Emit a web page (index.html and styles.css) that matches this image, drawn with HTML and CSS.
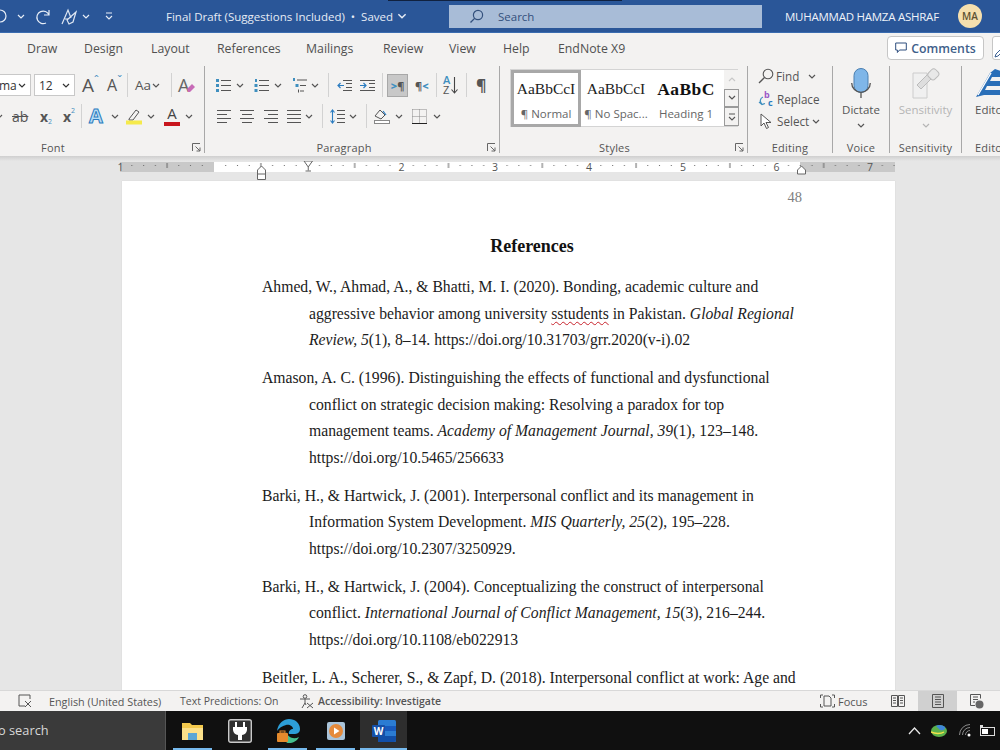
FILE: index.html
```html
<!DOCTYPE html>
<html lang="en">
<head>
<meta charset="utf-8">
<title>Final Draft (Suggestions Included)</title>
<link rel="stylesheet" href="styles.css">
</head>
<body>
<svg class="defs" width="0" height="0" aria-hidden="true">
  <defs>
    <symbol id="chev" viewBox="0 0 8 5"><path d="M1 1l3 3 3-3" fill="none" stroke="currentColor" stroke-width="1.2"/></symbol>
    <symbol id="launch" viewBox="0 0 9 9"><path d="M.5 8V.5H8M3.5 3.5L8 8M8 4.5V8H4.5" fill="none" stroke="#666" stroke-width="1"/></symbol>
  </defs>
</svg>
<div class="app">
  <header class="titlebar">
    <div class="qat">
      <svg class="undo" width="8" height="16" viewBox="0 0 8 16"><path d="M0 2a6 6 0 0 1 0 12" fill="none" stroke="#e8eef7" stroke-width="1.2"/></svg>
      <svg class="qc qc1" width="8" height="5"><use href="#chev"/></svg>
      <svg class="redo" width="16" height="17" viewBox="0 0 16 17"><path d="M14 2v5H9M14 7A6.3 6.3 0 1 0 11 15" fill="none" stroke="#e8eef7" stroke-width="1.2"/></svg>
      <svg class="touch" width="16" height="17" viewBox="0 0 16 17"><path d="M1 16L7 2l3 8M4 11h3" fill="none" stroke="#dfe7f3" stroke-width="1.2"/><path d="M6 12l9-8-3 10-4 2z" fill="none" stroke="#dfe7f3" stroke-width="1.2"/></svg>
      <svg class="qc qc2" width="8" height="5"><use href="#chev"/></svg>
      <svg class="cust" width="8" height="8" viewBox="0 0 8 8"><path d="M1 1h6M1 4l3 3 3-3" fill="none" stroke="#e8eef7" stroke-width="1.1"/></svg>
    </div>
    <div class="doc-title">Final Draft (Suggestions Included) &nbsp;•&nbsp; Saved <svg class="saved-chev" width="10" height="6"><use href="#chev"/></svg></div>
    <div class="searchbox">
      <svg width="15" height="15" viewBox="0 0 15 15"><circle cx="9" cy="6" r="4.6" fill="none" stroke="#33507c" stroke-width="1.2"/><path d="M5.6 9.4L1.5 13.5" stroke="#33507c" stroke-width="1.3"/></svg>
      <span>Search</span>
    </div>
    <div class="user">MUHAMMAD HAMZA ASHRAF</div>
    <div class="avatar">MA</div>
  </header>

  <nav class="tabs">
    <span class="tab t-draw">Draw</span>
    <span class="tab t-design">Design</span>
    <span class="tab t-layout">Layout</span>
    <span class="tab t-refs">References</span>
    <span class="tab t-mail">Mailings</span>
    <span class="tab t-review">Review</span>
    <span class="tab t-view">View</span>
    <span class="tab t-help">Help</span>
    <span class="tab t-end">EndNote X9</span>
    <button class="comments">
      <svg width="12" height="12" viewBox="0 0 12 12"><path d="M.7 1h10.6v7H4.5L2.4 10.500V8H.7z" fill="none" stroke="#2f4f7f" stroke-width="1"/></svg>
      Comments
    </button>
    <span class="share"><svg width="9" height="10" viewBox="0 0 9 10"><path d="M1 9l1-3 5-5 2 2-5 5z" fill="none" stroke="#3b5f92"/></svg></span>
  </nav>

  <section class="ribbon">
    <div class="grp g-font">
      <div class="row fr1">
        <div class="combo c-font"><span>ma</span><svg width="8" height="5"><use href="#chev"/></svg></div>
        <div class="combo c-size"><span>12</span><svg width="8" height="5"><use href="#chev"/></svg></div>
        <span class="grow">A<i>ˆ</i></span>
        <span class="shrink">A<i>ˇ</i></span>
        <span class="sep"></span>
        <span class="case">Aa <svg width="8" height="5"><use href="#chev"/></svg></span>
        <span class="sep"></span>
        <span class="clear">A<svg width="10" height="10" viewBox="0 0 10 10"><path d="M1 6l5-5 3 3-5 5H2z" fill="#c76bb7"/></svg></span>
      </div>
      <div class="row fr2">
        <svg width="8" height="5" class="cut"><use href="#chev"/></svg>
        <span class="strike">ab</span>
        <span class="sub">x<small>2</small></span>
        <span class="sup">x<small>2</small></span>
        <span class="sep"></span>
        <span class="effect">A</span>
        <svg width="8" height="5"><use href="#chev"/></svg>
        <svg width="16" height="18" viewBox="0 0 16 18"><path d="M3 12l7-9 3 2-6 8H3z" fill="none" stroke="#555" stroke-width="1"/><rect y="13.500" width="16" height="4" fill="#f5ea4b"/></svg>
        <svg width="8" height="5"><use href="#chev"/></svg>
        <span class="fcolor">A</span>
        <svg width="8" height="5"><use href="#chev"/></svg>
      </div>
      <div class="glabel"><span>Font</span><svg width="9" height="9"><use href="#launch"/></svg></div>
    </div>

    <div class="grp g-para">
      <div class="row pr1">
        <svg class="ic" width="15" height="15" viewBox="0 0 15 15"><g fill="#3f8fbf"><rect y="1" width="3" height="3"/><rect y="6" width="3" height="3"/><rect y="11" width="3" height="3"/></g><path d="M5 2.500h10M5 7.500h10M5 12.500h10" stroke="#555"/></svg>
        <svg width="8" height="5"><use href="#chev"/></svg>
        <svg class="ic" width="15" height="15" viewBox="0 0 15 15"><g fill="#3f8fbf"><rect x="1" y="1" width="2" height="3"/><rect x=".5" y="6" width="3" height="3"/><rect x=".5" y="11" width="3" height="3"/></g><path d="M5 2.500h10M5 7.500h10M5 12.500h10" stroke="#555"/></svg>
        <svg width="8" height="5"><use href="#chev"/></svg>
        <svg class="ic" width="15" height="15" viewBox="0 0 15 15"><g fill="#3f8fbf"><rect x="1" y="0" width="2" height="3"/><rect x="3.500" y="6" width="3" height="3"/></g><path d="M5 2h10M8 7.500h6M8 13h4" stroke="#555"/><rect x="6" y="11.500" width="1" height="3" fill="#555"/></svg>
        <svg width="8" height="5"><use href="#chev"/></svg>
        <span class="sep"></span>
        <svg class="ic" width="15" height="13" viewBox="0 0 15 13"><path d="M6 1.500h9M9 4.500h6M9 8.500h6M6 11.500h9" stroke="#555"/><path d="M7 6.500H1M3.500 4L1 6.500 3.500 9" fill="none" stroke="#2b7cc0" stroke-width="1.200"/></svg>
        <svg class="ic" width="15" height="13" viewBox="0 0 15 13"><path d="M0 1.500h15M9 4.500h6M9 8.500h6M0 11.500h15" stroke="#555"/><path d="M0 6.500h6M3.500 4L6 6.500 3.500 9" fill="none" stroke="#2b7cc0" stroke-width="1.200"/></svg>
        <span class="sep"></span>
        <span class="ltr"><b>&gt;</b>¶</span>
        <span class="rtl">¶<b>&lt;</b></span>
        <span class="sep"></span>
        <span class="sort"><span class="az"><b>A</b><br>Z</span><svg width="7" height="17" viewBox="0 0 7 17"><path d="M3.500 0v16M.5 12.500l3 3.500 3-3.500" fill="none" stroke="#444" stroke-width="1.100"/></svg></span>
        <span class="sep"></span>
        <span class="pilcrow">¶</span>
      </div>
      <div class="row pr2">
        <svg class="ic" width="14" height="13" viewBox="0 0 14 13"><path d="M0 .5h14M0 4.500h10M0 8.500h14M0 12.500h10" stroke="#555"/></svg>
        <svg class="ic" width="14" height="13" viewBox="0 0 14 13"><path d="M0 .5h14M2 4.500h10M0 8.500h14M2 12.500h10" stroke="#555"/></svg>
        <svg class="ic" width="14" height="13" viewBox="0 0 14 13"><path d="M0 .5h14M4 4.500h10M0 8.500h14M4 12.500h10" stroke="#555"/></svg>
        <svg class="ic" width="14" height="13" viewBox="0 0 14 13"><path d="M0 .5h14M0 4.500h14M0 8.500h14M0 12.500h14" stroke="#555"/></svg>
        <svg width="8" height="5"><use href="#chev"/></svg>
        <span class="sep"></span>
        <svg class="ic" width="15" height="15" viewBox="0 0 15 15"><path d="M7 1.500h8M7 5.500h8M7 9.500h8M7 13.500h8" stroke="#555"/><path d="M2.500 1v13M.5 3.500l2-2.500 2 2.500M.5 11.500l2 2.500 2-2.500" fill="none" stroke="#2b7cc0" stroke-width="1.100"/></svg>
        <svg width="8" height="5"><use href="#chev"/></svg>
        <span class="sep"></span>
        <svg class="ic" width="16" height="16" viewBox="0 0 16 16"><path d="M1 8l5-6 5 5-4 4z" fill="none" stroke="#555"/><path d="M9 3l3 4" stroke="#2b7cc0" stroke-width="1.200"/><rect x=".5" y="12.500" width="15" height="3" fill="#fff" stroke="#888"/></svg>
        <svg width="8" height="5"><use href="#chev"/></svg>
        <svg class="ic" width="15" height="15" viewBox="0 0 15 15"><path d="M.5.500h14v14M.5.500v14M7.500.500v14M.5 7.500h14" fill="none" stroke="#888" stroke-dasharray="1 1"/><path d="M0 14.500h15" stroke="#222"/></svg>
        <svg width="8" height="5"><use href="#chev"/></svg>
      </div>
      <div class="glabel"><span>Paragraph</span><svg width="9" height="9"><use href="#launch"/></svg></div>
    </div>

    <div class="grp g-styles">
      <div class="gallery">
        <div class="style sel"><span class="sample">AaBbCcI</span><span class="sname">¶ Normal</span></div>
        <div class="style"><span class="sample">AaBbCcI</span><span class="sname">¶ No Spac...</span></div>
        <div class="style"><span class="sample hd">AaBbC</span><span class="sname">Heading 1</span></div>
        <div class="scroll">
          <span class="up"><svg width="8" height="5"><use href="#chev"/></svg></span>
          <span><svg width="8" height="5"><use href="#chev"/></svg></span>
          <span><svg width="8" height="8" viewBox="0 0 8 8"><path d="M1 1h6M1 4l3 3 3-3" fill="none" stroke="#555" stroke-width="1.100"/></svg></span>
        </div>
      </div>
      <div class="glabel"><span>Styles</span><svg width="9" height="9"><use href="#launch"/></svg></div>
    </div>

    <div class="grp g-edit">
      <div class="edit-list">
        <div class="eitem e-find"><svg width="16" height="16" viewBox="0 0 16 16"><circle cx="10" cy="6" r="4.800" fill="none" stroke="#555" stroke-width="1.100"/><path d="M6.500 9.500L1 15" stroke="#555" stroke-width="1.300"/></svg><span>Find</span><svg class="ec" width="8" height="5"><use href="#chev"/></svg></div>
        <div class="eitem e-rep"><svg width="16" height="18" viewBox="0 0 16 18"><path d="M5 7a4 4 0 0 0-1 7M1 12l3 2.500 3-1" fill="none" stroke="#3f8fbf" stroke-width="1.200"/><text x="6" y="8" class="gb">b</text><text x="10" y="16" class="gc">c</text></svg><span>Replace</span></div>
        <div class="eitem e-sel"><svg width="12" height="17" viewBox="0 0 12 17"><path d="M1 1v12l3-3 2.500 5.500 2-1L6 9.500h5z" fill="#fff" stroke="#555"/></svg><span>Select</span><svg width="8" height="5"><use href="#chev"/></svg></div>
      </div>
      <div class="glabel"><span>Editing</span></div>
    </div>

    <div class="grp g-voice">
      <div class="big">
        <svg width="20" height="31" viewBox="0 0 20 31"><rect x="3" y=".5" width="14" height="24" rx="7" fill="#7fb6e8" stroke="#4a7fb0"/><path d="M.7 15a9.300 9.300 0 0 0 18.600 0M10 24.500V30" fill="none" stroke="#555" stroke-width="1.300"/></svg>
        <span>Dictate</span>
        <svg width="8" height="5"><use href="#chev"/></svg>
      </div>
      <div class="glabel"><span>Voice</span></div>
    </div>

    <div class="grp g-sens">
      <div class="big dim">
        <svg width="28" height="31" viewBox="0 0 28 31"><path d="M1 5h14v25H1z" fill="#f0f0f0" stroke="#ccc"/><path d="M5 17l12-12 4 4L9 21z" fill="#dedede" stroke="#bbb"/><rect x="17" y="1" width="9" height="10" rx="3" transform="rotate(45 21 6)" fill="#e8e8e8" stroke="#bbb"/></svg>
        <span>Sensitivity</span>
        <svg width="8" height="5"><use href="#chev"/></svg>
      </div>
      <div class="glabel"><span>Sensitivity</span></div>
    </div>

    <div class="grp g-editor">
      <div class="big">
        <svg width="26" height="31" viewBox="0 0 26 31"><path d="M1 29L15 5l5-4 6 2v6H17l-2 4h11v5H12l-2 4h16v5H9z" fill="#2a6fb8"/><path d="M3 27L16 5" stroke="#fff" stroke-width="1.400"/></svg>
        <span>Editor</span>
      </div>
      <div class="glabel"><span>Editor</span></div>
    </div>
  </section>
  <div class="ribbon-shadow"></div>

  <main class="workspace">
    <svg class="ruler" width="1000" height="20" viewBox="0 1 1000 20">
      <defs>
        <pattern id="ticks" x="214" y="0" width="93.800" height="10" patternUnits="userSpaceOnUse">
          <g fill="#666">
            <rect x="11.200" y="5" width="1" height="1"/><rect x="23" y="5" width="1" height="1"/><rect x="34.700" y="5" width="1" height="1"/>
            <rect x="46.400" y="3" width="1" height="5"/>
            <rect x="58.100" y="5" width="1" height="1"/><rect x="69.800" y="5" width="1" height="1"/><rect x="81.600" y="5" width="1" height="1"/>
          </g>
        </pattern>
      </defs>
      <rect x="120" y="2" width="94" height="10" fill="#c9c9c9"/>
      <rect x="214" y="2" width="586" height="10" fill="#fff"/>
      <rect x="800" y="2" width="95" height="10" fill="#c9c9c9"/>
      <rect x="126" y="2" width="769" height="10" fill="url(#ticks)"/>
      <g class="rnum">
        <text x="120.500" y="10.500" text-anchor="middle">1</text>
        <text x="401.500" y="10.500" text-anchor="middle">2</text>
        <text x="495" y="10.500" text-anchor="middle">3</text>
        <text x="589" y="10.500" text-anchor="middle">4</text>
        <text x="683" y="10.500" text-anchor="middle">5</text>
        <text x="776.500" y="10.500" text-anchor="middle">6</text>
        <text x="870" y="10.500" text-anchor="middle">7</text>
      </g>
      <path d="M304 1h8.500l-4.250 6z" fill="#fff" stroke="#666"/>
      <path d="M308.250 7v3.500M305.500 11h5.500" fill="none" stroke="#666"/>
      <path d="M261.500 6l4 4v4h-8v-4zM257.500 14v5.500h8V14" fill="#fff" stroke="#666"/>
      <path d="M801.500 6l4 4v4h-8v-4z" fill="#fff" stroke="#666"/>
    </svg>
    <article class="page">
      <div class="pageno">48</div>
      <h1>References</h1>
      <p>Ahmed, W., Ahmad, A., &amp; Bhatti, M. I. (2020). Bonding, academic culture and<br>aggressive behavior among university <span class="squig">sstudents</span> in Pakistan. <em>Global Regional<br>Review, 5</em>(1), 8–14. https://doi.org/10.31703/grr.2020(v-i).02</p>
      <p>Amason, A. C. (1996). Distinguishing the effects of functional and dysfunctional<br>conflict on strategic decision making: Resolving a paradox for top<br>management teams. <em>Academy of Management Journal, 39</em>(1), 123–148.<br>https://doi.org/10.5465/256633</p>
      <p>Barki, H., &amp; Hartwick, J. (2001). Interpersonal conflict and its management in<br>Information System Development. <em>MIS Quarterly, 25</em>(2), 195–228.<br>https://doi.org/10.2307/3250929.</p>
      <p>Barki, H., &amp; Hartwick, J. (2004). Conceptualizing the construct of interpersonal<br>conflict. <em>International Journal of Conflict Management, 15</em>(3), 216–244.<br>https://doi.org/10.1108/eb022913</p>
      <p>Beitler, L. A., Scherer, S., &amp; Zapf, D. (2018). Interpersonal conflict at work: Age and<br>personality as predictors of relationship conflict</p>
    </article>
  </main>

  <footer class="status">
    <svg class="st-proof" width="15" height="14" viewBox="0 0 15 14"><path d="M9 1H1v11h6" fill="none" stroke="#555"/><path d="M9 1h3v4M7 7l6 6M13 7l-6 6" fill="none" stroke="#555"/></svg>
    <span class="st-lang">English (United States)</span>
    <span class="st-pred">Text Predictions: On</span>
    <svg class="st-acc" width="15" height="15" viewBox="0 0 15 15"><circle cx="6" cy="2.500" r="1.800" fill="none" stroke="#555"/><path d="M1 5h10M6 5v4l-3 5M6 9l1 2M8 9l6 5M14 9l-6 5" fill="none" stroke="#555"/></svg>
    <strong class="st-acct">Accessibility: Investigate</strong>
    <span class="st-right">
      <svg width="15" height="14" viewBox="0 0 15 14"><path d="M3 1H.5v3M12 1h2.500v3M.5 10v3H3M14.500 10v3H12" fill="none" stroke="#555"/><path d="M4 2h5l2 2v8H4z" fill="none" stroke="#555"/></svg>
      <span class="st-focus">Focus</span>
      <svg class="st-read" width="14" height="12" viewBox="0 0 14 12"><path d="M.5.500h6v11h-6zM7.500.500h6v11h-6zM2 3h3M2 5.500h3M2 8h3M9 3h3M9 5.500h3M9 8h3" fill="none" stroke="#555"/></svg>
      <span class="st-print"><svg width="12" height="14" viewBox="0 0 12 14"><path d="M.5.500h11v13H.500zM3 3h6M3 5.500h6M3 8h6M3 10.500h6" fill="none" stroke="#555"/></svg></span>
      <svg class="st-web" width="14" height="15" viewBox="0 0 14 15"><path d="M.5.500h10v4M.5.500v11H5M3 3h5M3 5.500h5M3 8h2" fill="none" stroke="#555"/><circle cx="9.500" cy="10.500" r="4" fill="#666"/></svg>
    </span>
  </footer>

  <div class="taskbar">
    <div class="tb-search">o search</div>
    <div class="tb-app a1 run">
      <svg width="23" height="20" viewBox="0 0 23 20"><path d="M1 2h8l2 2h11v15H1z" fill="#f3c94d"/><path d="M1 7h21v12H1z" fill="#fbe08a"/><rect x="7" y="12" width="9" height="7" fill="#5aa6d6"/></svg>
    </div>
    <div class="tb-app a2">
      <svg width="24" height="24" viewBox="0 0 24 24"><rect x=".7" y=".7" width="22.600" height="22.600" rx="2" fill="#2f2f2f" stroke="#c9c9c9" stroke-width="1.400"/><path d="M8 3v5M16 3v5" stroke="#fff" stroke-width="2"/><path d="M5 8h14v3a6 6 0 0 1-5 5v5h-4v-5a6 6 0 0 1-5-5z" fill="#fff"/></svg>
    </div>
    <div class="tb-app a3 run">
      <svg width="24" height="24" viewBox="0 0 24 24"><path d="M1 12C2 4 8 0 13 0c6 0 11 4 11 10 0 4-3 5-6 5h-5c-1-3 2-5 4-5 0-3-4-5-7-4-4 1-7 3-9 6z" fill="#2d9fd8"/><path d="M10 13c2 5 7 8 13 5-2 4-6 6-10 6-1 0-2 0-3-1z" fill="#46c08e"/><rect x="1" y="14" width="11" height="9" rx="1" fill="#e58a2c"/><rect x="4" y="12" width="5" height="2" fill="none" stroke="#e58a2c"/></svg>
    </div>
    <div class="tb-app a4 run">
      <svg width="20" height="20" viewBox="0 0 20 20"><rect x="1" y="1" width="18" height="18" rx="2" fill="#aac4da"/><circle cx="10" cy="10" r="7" fill="#e58a3c"/><path d="M8 6.500l5.500 3.500L8 13.500z" fill="#fff"/></svg>
    </div>
    <div class="tb-app a5 run">
      <svg width="24" height="22" viewBox="0 0 24 22"><rect x="6" y="0" width="18" height="22" rx="1.500" fill="#2b7cd3"/><path d="M6 6h18v5H6z" fill="#185abd"/><path d="M6 16h18v4a2 2 0 0 1-2 2H7a1 1 0 0 1-1-1z" fill="#124fa8"/><rect x="0" y="5" width="13" height="12" rx="1" fill="#1550a8"/><text x="6.500" y="14.500" class="wtxt" text-anchor="middle">W</text></svg>
    </div>
    <div class="tray">
      <svg width="13" height="8" viewBox="0 0 13 8"><path d="M1 7l5.500-6L12 7" fill="none" stroke="#e8e8e8" stroke-width="1.300"/></svg>
      <svg class="globe" width="16" height="14" viewBox="0 0 16 14"><ellipse cx="8" cy="7" rx="8" ry="6" fill="#5bb04a"/><path d="M5 2c3-2 7-1 9 1 1 2-2 4-5 3z" fill="#3f86d6"/><path d="M0 8c4 2 10 2 13 0" stroke="#f5e04b" fill="none" stroke-width="1.500"/></svg>
      <svg class="wifi" width="13" height="13" viewBox="0 0 13 13"><path d="M.5 11A10.500 10.500 0 0 1 11 .5M3.500 11A7.500 7.500 0 0 1 11 3.500M6.500 11A4.500 4.500 0 0 1 11 6.500" fill="none" stroke="#8a8a8a"/><circle cx="10" cy="11" r="1.500" fill="#fff"/></svg>
      <svg class="batt" width="16" height="12" viewBox="0 0 16 12"><rect x=".5" y="2.500" width="14" height="8" fill="none" stroke="#ddd"/><rect x="2" y="4" width="6" height="5" fill="#fff"/><rect x="0" y="0" width="3" height="3" fill="#ddd"/></svg>
    </div>
  </div>
</div>
</body>
</html>
```
FILE: styles.css
```css
* { box-sizing: border-box; }
html, body { margin: 0; padding: 0; height: 100%; overflow: hidden; }
body { font-family: "Open Sans", "Noto Sans", sans-serif; color: #444; background: #e6e6e6; }
.defs { position: absolute; }
svg { display: block; flex: none; }
.app { width: 1000px; height: 750px; display: flex; flex-direction: column; overflow: hidden; }

/* Title bar */
.titlebar { height: 33px; flex: none; background: #2a5698; display: flex; align-items: center; color: #eef2f8; position: relative; border-bottom: 1px solid #3a6cb0; }
.titlebar::before { content: ""; position: absolute; left: 388px; top: 0; width: 234px; height: 1px; background: #10213f; }
.qat { width: 166px; display: flex; align-items: center; flex: none; color: #e8eef7; }
.undo { margin-right: 9px; }
.qc { color: #e8eef7; }
.redo { margin-left: 10px; }
.touch { margin-left: 10px; }
.qc2 { margin-left: 5px; }
.cust { margin-left: 15px; }
.doc-title { width: 283px; flex: none; font-size: 11.5px; display: flex; align-items: center; gap: 4px; white-space: nowrap; color: #e6ecf5; }
.saved-chev { color: #e6ecf5; }
.searchbox { width: 313px; flex: none; height: 23px; background: #a8bcd7; display: flex; align-items: center; padding-left: 20px; gap: 14px; font-size: 11.5px; color: #33507c; }
.user { margin-left: 23px; font-size: 11.5px; letter-spacing: -.25px; white-space: nowrap; color: #eef2f8; width: 173px; flex: none; }
.avatar { width: 24px; height: 24px; flex: none; border-radius: 50%; background: #f5dfae; color: #5e5232; font-size: 10px; font-weight: 600; display: flex; align-items: center; justify-content: center; }

/* Tabs */
.tabs { height: 30px; flex: none; background: #f3f2f1; display: flex; align-items: center; font-size: 12.3px; color: #505050; overflow: hidden; }
.tab { white-space: nowrap; flex: none; }
.t-draw { width: 57px; margin-left: 27px; }
.t-design { width: 67px; }
.t-layout { width: 66px; }
.t-refs { width: 89px; }
.t-mail { width: 77px; }
.t-review { width: 66px; }
.t-view { width: 54px; }
.t-help { width: 55px; }
.t-end { width: 329px; }
.comments { width: 97px; height: 24px; flex: none; background: #fff; border: 1px solid #c6c6c6; border-radius: 4px; display: flex; align-items: center; justify-content: center; gap: 4px; font: 600 12.300px "Open Sans", sans-serif; color: #3f5f8a; padding: 0; }
.share { margin-left: 8px; width: 20px; height: 24px; background: #fff; border: 1px solid #c6c6c6; border-radius: 3px 0 0 3px; padding: 11px 0 0 1px; flex: none; }

/* Ribbon */
.ribbon { height: 93px; flex: none; background: #f3f2f1; display: flex; overflow: hidden; align-items: stretch; }
.ribbon-shadow { height: 5px; flex: none; background: linear-gradient(#cfcfcf, #e6e6e6); }
.grp { margin: 3px 0; padding-top: 7px; display: flex; flex-direction: column; border-right: 1px solid #a8a8a8; flex: none; position: relative; }
.glabel { position: absolute; left: 0; right: 0; bottom: 0; height: 11px; display: flex; align-items: center; justify-content: center; font-size: 11px; line-height: 11px; color: #555; letter-spacing: .2px; }
.glabel svg { position: absolute; right: 3px; top: 1px; }
.row { display: grid; align-items: center; justify-items: start; color: #555; }
.sep { width: 1px; height: 24px; background: #d2d2d2; }

.g-font { width: 205px; }
.g-font .glabel { justify-content: flex-start; padding-left: 41px; }
.fr1 { height: 24px; grid-template-columns: 34px 48px 25px 20px 8px 36px 7px auto; }
.fr2 { height: 24px; margin-top: 7px; grid-template-columns: 12px 28px 23px 18px 8px 22px 15px 21px 17px 21px auto; }
.combo { height: 22px; background: #fff; border: 1px solid #c8c8c8; display: flex; align-items: center; justify-content: space-between; padding: 0 4px; font-size: 12px; color: #333; }
.c-font { width: 32px; border-left: 0; padding-left: 0; margin-left: -1px; font-size: 12px; }
.c-size { width: 41px; }
.grow, .shrink { font-size: 19px; line-height: 22px; color: #555; display: flex; }
.shrink { font-size: 16px; }
.grow i, .shrink i { font-style: normal; font-size: 12px; color: #4a90c2; line-height: 14px; }
.case { font-size: 13.500px; color: #555; display: flex; align-items: center; gap: 1px; }
.clear { font-size: 18px; line-height: 22px; font-family: "Open Sans", sans-serif; color: #666; display: flex; align-items: flex-end; }
.clear svg { margin: 0 0 3px -3px; }
.cut { margin-left: -5px; }
.strike { font-size: 14px; text-decoration: line-through; color: #555; }
.sub, .sup { font-weight: 700; font-size: 14px; color: #555; display: flex; }
.sub small { font-size: 7px; color: #3f8fbf; font-weight: 400; margin-top: 10px; }
.sup small { font-size: 7px; color: #3f8fbf; font-weight: 400; margin-top: -1px; }
.effect { font-size: 20px; font-weight: 700; line-height: 22px; color: #b8dcf5; -webkit-text-stroke: 1px #2b7cc0; }
.fcolor { width: 16px; text-align: center; font-size: 15px; line-height: 14px; color: #444; border-bottom: 4px solid #c8161d; height: 20px; }

.g-para { width: 295px; }
.g-para .glabel { padding-right: 16px; }
.pr1 { height: 24px; padding-left: 11px; grid-template-columns: 20px 18px 20px 18px 19px 17px 9px 23px 22px 5px 28px 21px 7px 23px 10px auto; }
.pr2 { height: 24px; margin-top: 7px; padding-left: 12px; grid-template-columns: 23px 24px 23px 18px 17px 8px 19px 17px 8px 21px 17px 21px auto; }
.ltr { width: 21px; height: 23px; background: #c8c8c8; border: 1px solid #a8a8a8; font-size: 11px; font-weight: 700; color: #555; display: flex; align-items: center; justify-content: center; }
.ltr b, .rtl b { color: #3f8fbf; }
.rtl { font-size: 11px; font-weight: 700; color: #555; white-space: nowrap; }
.sort { display: flex; align-items: center; gap: 1px; }
.az { font-size: 11px; line-height: 10px; color: #555; }
.az b { color: #3f8fbf; font-weight: 600; }
.pilcrow { font-size: 16px; font-weight: 700; color: #555; }

.g-styles { width: 248px; padding: 3px 0 0 10px; }
.g-styles .glabel { padding-right: 18px; }
.gallery { width: 228px; height: 58px; display: flex; background: #fff; border: 1px solid #d4d4d4; }
.style { width: 70px; flex: none; display: flex; flex-direction: column; align-items: center; padding-top: 9px; color: #555; }
.sel { width: 70px; height: 57px; border: 3px solid #a8a8a8; box-shadow: inset 0 0 0 1px #fff; padding-top: 6px; }
.sample { font: 15.500px/20px "Liberation Serif", serif; color: #222; white-space: nowrap; }
.hd { font-weight: 700; font-size: 17.500px; letter-spacing: .4px; color: #111; }
.sname { font-size: 11.500px; margin-top: 7px; white-space: nowrap; color: #666; }
.scroll { margin-left: 3px; width: 15px; flex: none; display: flex; flex-direction: column; }
.scroll span { height: 19px; display: flex; align-items: center; justify-content: center; border: 1px solid #9a9a9a; background: #f3f2f1; color: #555; }
.scroll .up { border: 0; color: #c8c8c8; }
.scroll .up svg { transform: rotate(180deg); }

.g-edit { width: 85px; padding: 0 0 0 10px; }
.edit-list { display: flex; flex-direction: column; font-size: 11.700px; color: #555; margin-top: -1px; }
.eitem { height: 22.500px; display: flex; align-items: center; }
.eitem span { margin-left: 3px; white-space: nowrap; }
.e-find span { margin-left: 2px; }
.e-find .ec { margin-left: 9px; }
.e-rep svg { margin-right: 0; }
.e-sel svg:first-child { margin: 0 2px 0 2px; }
.e-sel span + svg { margin-left: 3px; }
.gb { font: 700 9px "Open Sans", sans-serif; fill: #9b59c7; }
.gc { font: 700 9px "Open Sans", sans-serif; fill: #2b7cc0; }

.big { display: flex; flex-direction: column; align-items: center; font-size: 11.500px; color: #555; padding-top: 2px; white-space: nowrap; }
.big span { margin-top: 3px; line-height: 16px; }
.big > svg:last-child { margin-top: 5px; }
.g-voice { width: 57px; padding: 0; }
.g-sens { width: 72px; padding: 0; }
.dim { color: #b5b5b5; }
.g-editor { width: 60px; padding: 0 0 0 13px; border: 0; align-items: flex-start; }
.g-editor .big { align-items: flex-start; }
.g-editor .glabel { justify-content: flex-start; padding-left: 13px; }

/* Workspace */
.workspace { flex: 1; min-height: 0; background: #e6e6e6; overflow: hidden; display: flex; flex-direction: column; }
.ruler { flex: none; overflow: visible; }
.rnum { font: 10.500px "Open Sans", sans-serif; fill: #555; }
.page { flex: 1; margin-left: 122px; width: 773px; background: #fff; padding: 8px 93px 0 140px; color: #1c1c1c; font-family: "Liberation Serif", "Times New Roman", serif; box-shadow: 0 0 1px #c8c8c8; }
.pageno { text-align: right; font-size: 14.500px; line-height: 16px; color: #808080; }
.page h1 { margin: 28px 0 15px; font-size: 18px; line-height: 26px; text-align: center; color: #111; }
.page p { margin: 0 0 11.600px; padding-left: 47px; text-indent: -47px; font-size: 15.700px; line-height: 26.500px; white-space: nowrap; }
.squig { text-decoration: underline wavy #c8232c 1px; text-underline-offset: 2px; }

/* Status bar */
.status { height: 21px; flex: none; background: #f3f2f1; display: flex; align-items: center; font-size: 10.800px; color: #555; white-space: nowrap; border-top: 1px solid #d8d8d8; }
.st-proof { margin-left: 18px; }
.st-lang { margin-left: 16px; width: 131px; flex: none; }
.st-pred { width: 119px; flex: none; font-size: 10.500px; }
.st-acct { margin-left: 4px; font-weight: 600; font-size: 10.500px; }
.st-right { margin-left: auto; display: flex; align-items: center; height: 100%; }
.st-focus { margin-left: 3px; width: 53px; font-size: 11px; }
.st-read { margin-right: 13px; }
.st-print { width: 39px; height: 100%; background: #d0d0d0; display: flex; align-items: center; justify-content: center; margin-right: 13px; }
.st-web { margin-right: 16px; }

/* Taskbar */
.taskbar { height: 39px; flex: none; background: #101010; display: flex; align-items: stretch; color: #ddd; }
.tb-search { width: 166px; flex: none; background: #3a3a3a; border-right: 1px solid #555; font-size: 12.800px; line-height: 39px; text-indent: -2px; color: #d8d8d8; overflow: hidden; }
.tb-app { display: flex; align-items: center; justify-content: center; position: relative; flex: none; }
.tb-app.run::after { content: ""; position: absolute; left: 0; right: 0; bottom: 0; height: 2px; background: #76b9ed; }
.a1 { width: 39px; margin-left: 7px; }
.a2 { width: 24px; margin-left: 16px; }
.a3 { width: 39px; margin-left: 16px; }
.a4 { width: 39px; margin-left: 9px; }
.a5 { width: 47px; margin-left: 5px; background: #2e2e2e; }
.wtxt { font: 700 10px "Open Sans", sans-serif; fill: #fff; }
.tray { margin-left: auto; display: flex; align-items: center; padding-right: 4px; }
.globe { margin-left: 10px; }
.wifi { margin-left: 12px; }
.batt { margin-left: 8px; }
```
